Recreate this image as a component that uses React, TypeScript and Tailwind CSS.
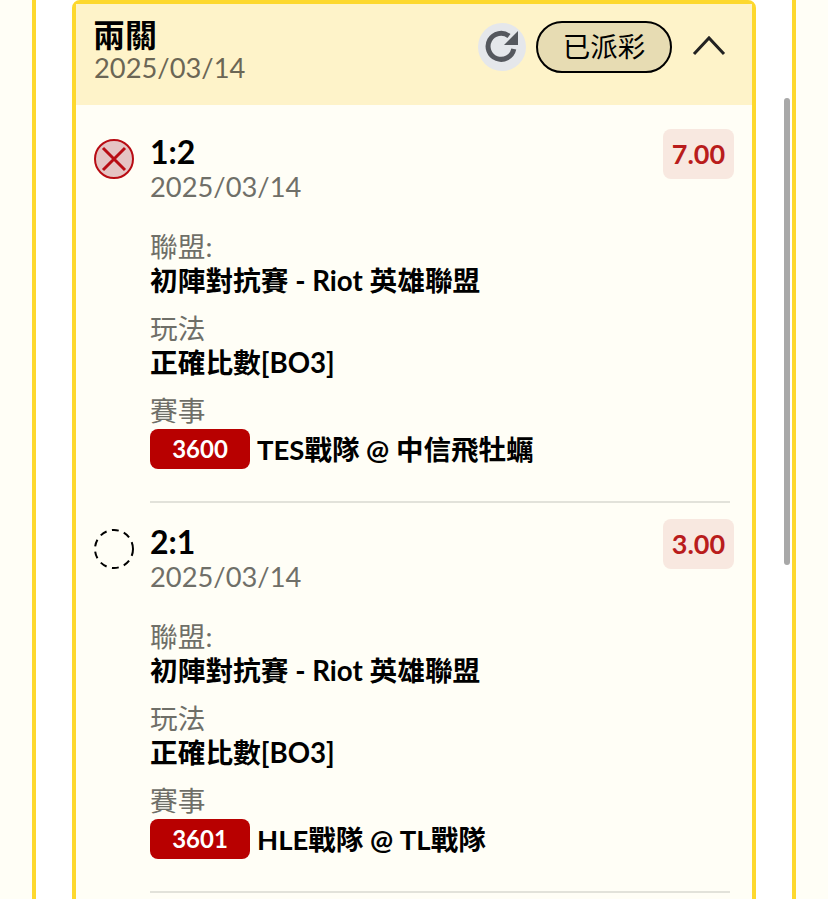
const LATIN = "font-['Lato','Noto_Sans_CJK_TC',sans-serif]";

const legs = [
  { score: "1:2", odds: "7.00", no: "3600", match: "TES戰隊 @ 中信飛牡蠣", lost: true },
  { score: "2:1", odds: "3.00", no: "3601", match: "HLE戰隊 @ TL戰隊", lost: false },
];

function LostIcon() {
  return (
    <svg width="40" height="40" viewBox="0 0 40 40" fill="none">
      <circle cx="20" cy="20" r="19" fill="#e5c4c4" stroke="#b80c14" strokeWidth="2" />
      <path d="M9 9 31 31M31 9 9 31" stroke="#b80c14" strokeWidth="3" />
    </svg>
  );
}

function PendingIcon() {
  return (
    <svg width="40" height="40" viewBox="0 0 40 40" fill="none">
      <circle cx="20" cy="20" r="19" stroke="#000" strokeWidth="2" strokeDasharray="7 5.4" />
    </svg>
  );
}

function Leg({ leg }: { leg: (typeof legs)[number] }) {
  return (
    <div className="flex gap-4 h-[390px]">
      <div className="w-10 shrink-0 pt-[10px]">{leg.lost ? <LostIcon /> : <PendingIcon />}</div>
      <div className="w-[584px]">
        <div className="flex justify-between h-[74px]">
          <div className="pt-[5px]">
            <div className="text-[32px] leading-[36px] font-bold text-black">{leg.score}</div>
            <div className="text-[27.3px] leading-[32px] text-[#6f6f68] mt-[1px]">2025/03/14</div>
          </div>
          <div className="w-[71px] h-[50px] rounded-lg bg-[#f8e8e0] text-[#b91c1c] text-[27px] leading-[50px] font-bold text-center">
            {leg.odds}
          </div>
        </div>
        <div className="mt-[27px] text-[27.7px] leading-[34px] text-[#6f6f68]">聯盟:</div>
        <div className="text-[27.7px] leading-[34px] font-bold text-black">初陣對抗賽 - Riot 英雄聯盟</div>
        <div className="mt-[14px] text-[27.7px] leading-[34px] text-[#6f6f68]">玩法</div>
        <div className="text-[27.7px] leading-[34px] font-bold text-black">正確比數[BO3]</div>
        <div className="mt-[14px] text-[27.7px] leading-[34px] text-[#6f6f68]">賽事</div>
        <div className="flex items-start gap-[7px] mt-[1px]">
          <span className="w-[100px] h-10 rounded-lg bg-[#b80000] text-white text-[24px] leading-10 font-bold text-center">
            {leg.no}
          </span>
          <span className="h-10 text-[27.5px] leading-[38px] pt-[2px] font-bold text-black">{leg.match}</span>
        </div>
        <div className="h-[2px] bg-[#e2e2da] mt-[32px] w-[580px]" />
      </div>
    </div>
  );
}

export default function App() {
  return (
    <div className={`h-[899px] overflow-hidden bg-[#fffef6] px-8 relative ${LATIN}`}>
      <div className="h-full bg-white border-x-4 border-[#fdd82e] px-9">
        <div className="h-[1000px] rounded-t-lg border-4 border-[#fdd82e] bg-[#fffef6]">
          <div className="h-[101px] bg-[#fef3c9] pl-[18px] pr-[26px] flex items-start justify-between">
            <div className="pt-[11px]">
              <div className="text-[32px] leading-[40px] font-bold text-black ml-[-1px]">兩關</div>
              <div className="text-[27.3px] leading-[32px] text-[#6b6655] mt-[-3px]">2025/03/14</div>
            </div>
            <div className="flex items-center gap-[10px] pt-[17px]">
              <div className="w-[48px] h-[48px] rounded-full bg-[#e5e7eb] flex items-center justify-center">
                <svg width="40" height="40" viewBox="0 0 40 40" fill="none">
                  <path d="M31.8 22A13 13 0 1 1 27 9" stroke="#55585e" strokeWidth="5" />
                  <path d="M36 4V18H22Z" fill="#55585e" />
                </svg>
              </div>
              <div className="w-[136px] h-[52px] rounded-full border-2 border-black bg-[#e7dcb3] text-[27.5px] leading-[48px] text-center text-black">
                已派彩
              </div>
              <svg className="ml-[10px] mb-[4px]" width="34" height="22" viewBox="0 0 34 22" fill="none">
                <path d="M2 20 17 4l15 16" stroke="#222" strokeWidth="3" />
              </svg>
            </div>
          </div>
          <div className="pl-[18px] pt-[24px]">
            {legs.map((leg) => (
              <Leg key={leg.no} leg={leg} />
            ))}
          </div>
        </div>
      </div>
      <div className="absolute left-[784px] top-[98px] w-[6px] h-[467px] rounded-full bg-[#a8a8a8]" />
    </div>
  );
}
